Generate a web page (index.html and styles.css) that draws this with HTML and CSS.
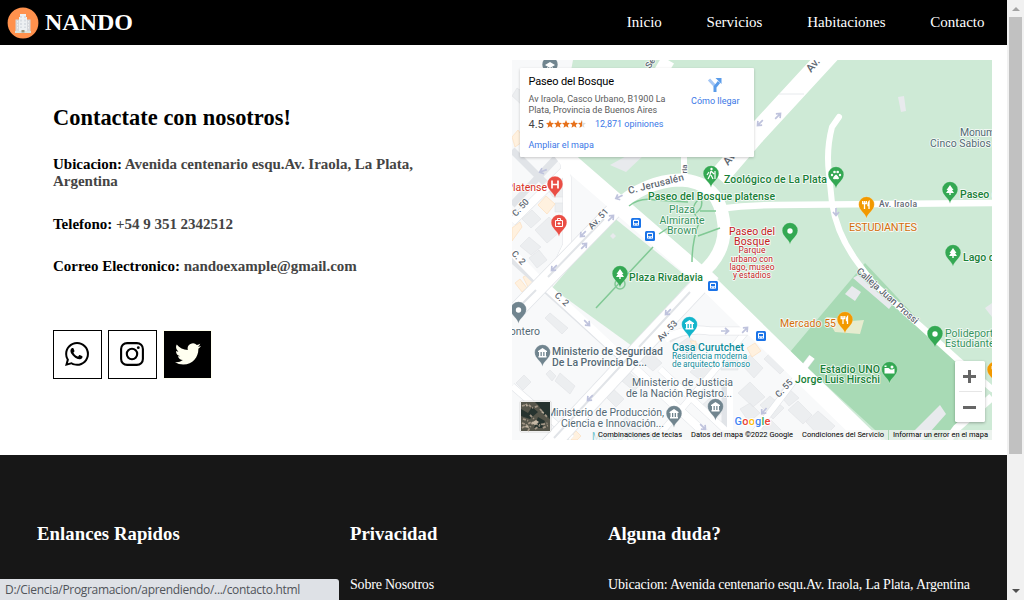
FILE: index.html
```html
<!DOCTYPE html>
<html lang="es">
<head>
<meta charset="utf-8">
<title>Nando - Contacto</title>
<link rel="stylesheet" href="styles.css">
</head>
<body>
<div class="page">
  <header class="header">
    <a class="brand">
      <svg class="logo" viewBox="0 0 32 32"><circle cx="16" cy="16" r="15.400" fill="#ff914d"/><path d="M8.500 12.500h4v12.500h-4zM19.500 12.500h4v12.500h-4z" fill="#d5d8dc"/><path d="M12 10h1V7h6v3h1v15h-8z" fill="#edf0f2"/><path d="M14 9v12M18 9v12" stroke="#c5ccd4" stroke-width="1" stroke-dasharray="2 1.500"/><path d="M10.500 14v8M21.500 14v8" stroke="#f0f0f0" stroke-dasharray="1.500 1.500"/><path d="M8 24h16v2H8z" fill="#d9e5e0"/><path d="M14.500 23h3v2.500h-3z" fill="#9b9478"/></svg>
      <span>NANDO</span>
    </a>
    <nav class="nav"><a>Inicio</a><a>Servicios</a><a>Habitaciones</a><a>Contacto</a></nav>
  </header>
  <main class="contact">
    <section class="info">
      <h2>Contactate con nosotros!</h2>
      <p><b>Ubicacion:</b> Avenida centenario esqu.Av. Iraola, La Plata,<br>Argentina</p>
      <p><b>Telefono:</b> +54 9 351 2342512</p>
      <p><b>Correo Electronico:</b> nandoexample@gmail.com</p>
      <div class="social">
        <a class="box"><svg viewBox="0 0 24 24"><path d="M.06 24l1.680-6.160A11.870 11.870 0 0 1 .160 11.890C.160 5.340 5.490 0 12.050 0a11.820 11.820 0 0 1 8.410 3.490 11.820 11.820 0 0 1 3.480 8.410c0 6.560-5.340 11.890-11.890 11.890-1.990 0-3.950-.500-5.690-1.450L.060 24zm6.590-3.810c1.680 1 3.280 1.590 5.400 1.590 5.450 0 9.890-4.430 9.890-9.880 0-5.460-4.420-9.890-9.880-9.890-5.450 0-9.890 4.430-9.890 9.880 0 2.230.650 3.890 1.750 5.630l-1 3.650 3.730-.980z"/><path d="M17.470 14.390c-.070-.130-.270-.200-.570-.350-.300-.150-1.760-.870-2.030-.970-.270-.100-.470-.150-.670.150-.200.300-.770.970-.940 1.170-.170.200-.350.220-.650.070-.300-.150-1.250-.460-2.390-1.470-.880-.790-1.480-1.760-1.650-2.060-.170-.300-.020-.460.130-.610.140-.130.300-.350.450-.520.150-.170.200-.300.300-.500.100-.200.050-.370-.030-.520-.070-.150-.670-1.610-.910-2.200-.250-.580-.490-.500-.670-.510h-.570c-.200 0-.520.070-.790.370-.270.300-1.040 1.020-1.040 2.480 0 1.460 1.060 2.880 1.210 3.070.150.200 2.100 3.200 5.080 4.490.710.310 1.260.490 1.690.630.710.230 1.360.190 1.870.120.570-.090 1.760-.720 2.010-1.410.250-.700.250-1.290.170-1.420z"/></svg></a>
        <a class="box"><svg viewBox="0 0 24 24" fill="none" stroke="#000" stroke-width="2.100"><rect x="1.100" y="1.100" width="21.800" height="21.800" rx="6"/><circle cx="12" cy="12" r="5.200"/><circle cx="18.300" cy="5.700" r="1.400" fill="#000" stroke="none"/></svg></a>
        <a class="box box-dark"><svg viewBox="0 0 24 24"><path fill="#fffff0" d="M23.950 4.570a10 10 0 0 1-2.820.770 4.960 4.960 0 0 0 2.160-2.720c-.950.550-2 .950-3.130 1.180a4.920 4.920 0 0 0-8.380 4.480C7.690 8.090 4.070 6.130 1.640 3.160a4.820 4.820 0 0 0-.670 2.480c0 1.710.870 3.210 2.190 4.100a4.900 4.900 0 0 1-2.230-.620v.060a4.920 4.920 0 0 0 3.950 4.830 5 5 0 0 1-2.210.080 4.940 4.940 0 0 0 4.600 3.420A9.870 9.870 0 0 1 0 19.540a13.990 13.990 0 0 0 7.560 2.210c9.050 0 14-7.500 14-13.980 0-.210 0-.420-.020-.630a9.940 9.940 0 0 0 2.460-2.550z"/></svg></a>
      </div>
    </section>
    <section class="map">
      <svg class="map-art" viewBox="512 60 480 380">
        <defs>
          <g id="pin"><path d="M0 13.500C-1 8-7.800 5.500-7.800-.5A7.800 7.800 0 0 1 7.800-.5C7.800 5.500 1 8 0 13.500z"/></g>
          <g id="tree" fill="#fff"><path d="M0-5L3.500 0H2L4 3H.7V5H-.7V3H-4L-2 0H-3.500z"/></g>
          <g id="bank" fill="#fff"><path d="M-4.500-2L0-5L4.500-2V-1H-4.500zM-4 3H4V4.500H-4zM-3.500-1H-2V3H-3.500zM-.7-1H.7V3H-.7zM2-1H3.500V3H2z"/></g>
          <g id="bus"><rect x="-5" y="-5" width="10" height="10" rx="1.500" fill="#1a73e8"/><rect x="-3" y="-3.200" width="6" height="6" rx="1" fill="#fff"/><path d="M-2-2H2V.3H-2zM-1.800 1.300h1v1h-1zM.8 1.300h1v1h-1z" fill="#1a73e8"/></g>
          <g id="fork" stroke="#fff" fill="none" stroke-width="1.300"><path d="M-2-4V4M-3.800-4V-1.500H-.2V-4M2.500 4V-3.500q-1.200 1-1 4h1"/></g>
          <g id="arr" stroke="#bfc3dd" stroke-width="1.700" fill="none"><path d="M-4 0H3M0-3L3.500 0L0 3"/></g>
        </defs>
        <rect x="512" y="60" width="480" height="380" fill="#f8f9fa"/>
        <!-- parks -->
        <g fill="#ceead6">
          <path d="M573 60H992V440H872L700 273L572 160L560 130z"/>
          <path d="M552 288L613 217L691 280L632 346z"/>
        </g>
        <path d="M865 263L790 352L886 440H958V362z" fill="#a8dab5"/>
        <g fill="#e8eaed">
          <path d="M898 97l6-1 2 15-5 1z"/><path d="M852 286l9 6-6 9-10-7zM610 236l3-3 3 3-3 3zM858 275l34 30-3 4-36-31z"/>
          <path d="M905 440l35-35 6 9-23 26zM985 308l7-5v14zM610 165l20-11h15l-19 18z"/>
        </g>
        <path d="M826 317l9 1 16 3 13-1-4 14-25-2z" fill="#e6eccf"/>
        <!-- secondary blocks -->
        <g fill="#eceef0" stroke="#e0e2e5" stroke-width=".6">
          <path d="M522 219l10-9 9 9-10 9zM535 230l14-13 13 13-15 13zM520 246l9-9 12 10-10 8zM529 258l10-8 8 10-10 8zM555 203h11v9h-11zM546 187l12-12 7 7v15h-12zM545 318l5-5 18 15-6 6zM555 381l5-8 15 13-5 8zM546 374l4-4 6 6-4 5zM516 383l8-8 7 7-8 8zM517 88l12 8-7 9-10-9z"/>
          <path d="M617 377l8-8 17 14-8 8zM601 392l8-7 15 14-8 8zM641 361l9-9 12 11-9 8zM676 346l13-9 11 9-11 14zM690 372l13-12 13 12-12 11zM721 354h17v16h-17zM741 364l9-9 13 13-9 10zM764 359l12-12 16 15-12 12zM738 393l12-11 15 15-12 10zM760 405l10-9 14 12-11 11zM778 393l8-7 13 12-10 8zM788 410l10-9 14 14-9 9zM806 422l12-11 17 15-13 13zM740 409l10-6 10 10-11 9zM762 428l9-8 13 13-7 7h-8z"/>
          <path d="M618 426l8-9 15 12-9 11zM700 407l10-9 14 13-10 9z"/>
        </g>
        <g fill="#fff1df" stroke="#fbdcb8" stroke-width=".6"><path d="M538 205l8-9 9 8-8 10zM512 241v-13l8-6 2 5zM515 283l5-4 7 9-5 4zM523 277l6-3 4 9-5 4zM747 348l8-5 6 8-9 6zM512 137l6-7 7 10-10 7zM570 436l6-5 5 5-4 4h-6zM690 341h6v8z"/></g>
        <!-- road casing and fill -->
        <g fill="none" stroke-linejoin="round">
          <g stroke="#e1e4e8">
            <path d="M512 222L571 164M512 258L644 377L712 440M548 285L567 245V178L558 130" stroke-width="9"/>
            <path d="M512 150L545 183M512 386L572 438M660 369L736 440M752 324L718 366L655 440M725 382V440M812 357L749 440M512 205L620 90" stroke-width="7"/>
          </g>
          <g stroke="#fff">
            <path d="M512 222L571 164M512 252L542 283L644 377L712 440M548 285L567 245V178L558 130" stroke-width="8"/>
            <path d="M512 386L572 438M660 369L736 440M752 324L718 366L655 440M730 382V440M812 357L749 440" stroke-width="6"/>
            <path d="M668 339Q685 327 710 331H748" stroke="#e5e7ea" stroke-width="9"/><path d="M665 339Q685 327 710 331H750" stroke-width="7.500"/>
            <path d="M512 315L542 284L618 206" stroke="#e1e4e8" stroke-width="17"/><path d="M512 315L542 284L618 206" stroke-width="15.500"/>
            <path d="M712 272L632 357L548 447" stroke="#e1e4e8" stroke-width="19"/><path d="M712 272L632 357L548 447" stroke-width="17.500"/>
            <path d="M543 128L572 164L625 210L699 274L750 324L877 448" stroke-width="18"/>
            <path d="M835 48L754 136L718 178" stroke-width="20"/>
            <path d="M615 208Q645 181 680 180Q720 181 724 225Q726 255 698 276" stroke-width="13"/>
            <path d="M684 150V184" stroke-width="6"/><path d="M668 60L650 90" stroke-width="14"/>
            <path d="M718 209Q745 205 775 205L992 203" stroke-width="6.500"/>
            <path d="M839 117L832 127Q826 150 829 174L832 203Q837 235 858 263L873 283L957 359L992 389" stroke-width="6" stroke-linecap="round"/>
            <path d="M948 440L957 428L992 397" stroke-width="8"/>
          </g>
          <g stroke="#e1e4e8"><path d="M512 314L536 290M548 277L604 219M690 292L639 347M628 358L554 438" stroke-width="2"/><path d="M779 94H804" stroke-width=".8"/></g>
          <g stroke="#81c995" stroke-width="1.500"><path d="M653 247L596 308M629 206Q640 197 655 200L688 202M659 234L668 228M698 200Q688 210 700 220Q692 240 692 262M700 211H716M698 236L720 228M700 195Q705 207 696 213"/><circle cx="620" cy="284" r="5"/></g>
        </g>
        <use href="#arr" transform="translate(760 123) rotate(135)"/><use href="#arr" transform="translate(778 116) rotate(-45)"/>
        <use href="#arr" transform="translate(583 234) rotate(135)"/><use href="#arr" transform="translate(584 246) rotate(-45)"/><use href="#arr" transform="translate(611 218) rotate(-45)"/><use href="#arr" transform="translate(554 268) rotate(135)"/><use href="#arr" transform="translate(619 197) rotate(155)"/><use href="#arr" transform="translate(587 323) rotate(45)"/><use href="#arr" transform="translate(668 312) rotate(135)"/><use href="#arr" transform="translate(590 398) rotate(135)"/><use href="#arr" transform="translate(725 331)"/><use href="#arr" transform="translate(745 330) rotate(-45)"/><use href="#arr" transform="translate(836 212) rotate(90)"/><use href="#arr" transform="translate(703 427) rotate(45)"/><use href="#arr" transform="translate(764 411) rotate(130)"/><use href="#arr" transform="translate(543 171) rotate(160)"/>
        <use href="#bus" x="636" y="223"/><use href="#bus" x="650" y="236"/><use href="#bus" x="713" y="286"/><use href="#bus" x="761" y="336"/>
        <!-- pins -->
        <g stroke="#fff" stroke-opacity=".5" stroke-width=".4">
          <g fill="#34a853"><use href="#pin" x="711" y="174"/><use href="#pin" x="836" y="175"/><use href="#pin" x="950" y="190"/><use href="#pin" x="790" y="231"/><use href="#pin" x="953" y="253"/><use href="#pin" x="620" y="274"/><use href="#pin" x="935" y="334"/><use href="#pin" x="889.500" y="370"/></g>
          <g fill="#f29900"><use href="#pin" x="866.500" y="205"/><use href="#pin" x="845" y="320"/><use href="#pin" x="995" y="370"/></g>
          <g fill="#ea4e45"><use href="#pin" x="555" y="184.500"/><use href="#pin" x="559" y="223"/></g>
          <g fill="#71858f"><use href="#pin" x="550" y="65"/><use href="#pin" x="518.500" y="310"/><use href="#pin" x="542.500" y="353"/><use href="#pin" x="674" y="414"/><use href="#pin" x="715.500" y="407"/></g>
          <use href="#pin" x="689.500" y="325" fill="#12b5cb"/>
        </g>
        <use href="#tree" x="620" y="274"/><use href="#tree" x="950" y="190"/><use href="#tree" x="953" y="253"/>
        <use href="#bank" x="542.500" y="353"/><use href="#bank" x="674" y="414"/><use href="#bank" x="715.500" y="407"/><use href="#bank" x="689.500" y="325"/>
        <use href="#fork" x="866.500" y="205"/><use href="#fork" x="845" y="320"/><use href="#fork" x="996" y="370"/>
        <g fill="#fff"><circle cx="790" cy="231" r="2.700"/><circle cx="935" cy="334" r="2.700"/><circle cx="518.500" cy="310" r="2.700"/>
          <circle cx="832" cy="175" r="1.200"/><circle cx="834.500" cy="172" r="1.300"/><circle cx="837.700" cy="172" r="1.300"/><circle cx="840" cy="175" r="1.200"/><path d="M836 174.500q2 1 3 3.500 0 2-3 1-3 1-3-1 1-2.500 3-3.500z"/>
          <path d="M884.500 368h4l2 1.500h2l2-1v5h-10zM884.500 365.500h2v1.500h-2z"/><circle cx="892" cy="367" r="1.500"/><path d="M545 65l5-3 5 3-5 3zM547 67l3 2 3-2v3h-6z"/></g>
        <g stroke="#fff" fill="none" stroke-width="1.700"><path d="M552 180.500v8M558 180.500v8M552 184.500h6"/><path d="M555.500 220.500h7v6h-7zM557.500 220v-1.500h3v1.500M559 222v3M557.500 223.500h3" stroke-width="1"/><path d="M711 171l-1 4-2 4M711 175l2 4M711 171l3 3M709 172l-2 3M715 171v8" stroke-width="1.200"/></g><circle cx="711.500" cy="169" r="1.200" fill="#fff"/>
        <!-- labels -->
        <g class="lbl">
          <g fill="#5f6872" font-size="9"><text transform="translate(811 73) rotate(-50)" font-size="11">Av.</text><text transform="translate(728 166) rotate(-50)" font-size="11">Av.</text><text transform="translate(650 69) rotate(-58)">Se</text><text transform="translate(687 169) rotate(-90)" text-anchor="middle" font-size="8">ria</text>
            <text transform="translate(516 217) rotate(-48)" textLength="20">C. 50</text><text transform="translate(592 230) rotate(-47)" textLength="25">Av. 51</text><text transform="translate(511 254) rotate(47)">C. 2</text><text transform="translate(554 296) rotate(43)">C. 2</text><text transform="translate(661 342) rotate(-47)" textLength="25">Av. 53</text><text transform="translate(779 398) rotate(-47)" textLength="21">C. 55</text>
            <text x="879" y="207" textLength="38" font-size="8.500">Av. Iraola</text><text transform="translate(856 272) rotate(41.500)" textLength="79" font-size="9.500">Calleja Juan Prossi</text><text transform="translate(629 194) rotate(-14)" textLength="57" font-size="10">C. Jerusalén</text></g>
          <g fill="#188038" font-size="10.500"><text x="724" y="183" textLength="103">Zoológico de La Plata</text><text x="648" y="200" textLength="127">Paseo del Bosque platense</text><text x="629" y="281" textLength="74">Plaza Rivadavia</text><text x="960" y="198">Paseo del</text><text x="963" y="261">Lago del</text><text x="880" y="373" text-anchor="end" textLength="60">Estadio UNO</text><text x="880" y="383" text-anchor="end" textLength="85">Jorge Luis Hirschi</text></g>
          <g fill="#389460" font-size="10.500" class="thin"><g text-anchor="middle"><text x="682" y="213" textLength="26">Plaza</text><text x="682" y="224" textLength="45">Almirante</text><text x="682" y="234" textLength="30">Brown</text></g><text x="945" y="336.500">Polideportivo</text><text x="945" y="347">Estudiantes</text></g>
          <g fill="#c5221f" text-anchor="middle" class="thin"><text x="752" y="234.500" font-size="10.500" textLength="46">Paseo del</text><text x="752" y="245" font-size="10.500" textLength="36">Bosque</text><g font-size="8.500"><text x="752" y="253" textLength="27">Parque</text><text x="752" y="261.500" textLength="42">urbano con</text><text x="752" y="269.500" textLength="45">lago, museo</text><text x="752" y="278" textLength="38">y estadios</text></g></g>
          <text x="547" y="191" fill="#d93025" text-anchor="end" font-size="10.500" class="thin">Platense</text>
          <g fill="#d56e0c" font-size="10.500" class="thin"><text x="849" y="231" textLength="68" font-size="11">ESTUDIANTES</text><text x="780" y="327" textLength="56">Mercado 55</text></g>
          <g fill="#0b8b9b"><text x="672" y="350.500" font-size="10.500" textLength="72">Casa Curutchet</text><text x="672" y="359" font-size="8.500" textLength="75" class="thin">Residencia moderna</text><text x="672" y="367" font-size="8.500" textLength="78" class="thin">de arquitecto famoso</text></g>
          <g fill="#546975" font-size="10.500"><text x="552" y="355" textLength="111">Ministerio de Seguridad</text><text x="552" y="365.500" textLength="95">De La Provincia De...</text><g class="thin"><text x="540" y="335" text-anchor="end">Montero</text><text x="632" y="386" textLength="101">Ministerio de Justicia</text><text x="626" y="396.500" textLength="106">de la Nación Registro...</text><text x="547" y="416" textLength="117">Ministerio de Producción,</text><text x="561" y="426.500" textLength="103">Ciencia e Innovación...</text><text x="960" y="136" textLength="55">Monumento</text><text x="930" y="147" textLength="61">Cinco Sabios</text></g></g>
        </g>
        <text x="592" y="440" fill="#12a5b8" font-size="10" opacity=".6" textLength="68">Museo Policial</text>
        <text x="734.500" y="424.500" class="google" font-size="11" textLength="36"><tspan fill="#4285f4">G</tspan><tspan fill="#ea4335">o</tspan><tspan fill="#fbbc05">o</tspan><tspan fill="#4285f4">g</tspan><tspan fill="#34a853">l</tspan><tspan fill="#ea4335">e</tspan></text>
        <rect x="595" y="430" width="397" height="10" fill="#f5f5f5" opacity=".75"/>
        <path d="M888.500 430v10" stroke="#a8dab5"/>
        <g font-size="7.500" fill="#000"><text x="598" y="437.300" textLength="84">Combinaciones de teclas</text><text x="691" y="437.300" textLength="102">Datos del mapa ©2022 Google</text><text x="802" y="437.300" textLength="82">Condiciones del Servicio</text><text x="893" y="437.300" textLength="95">Informar un error en el mapa</text></g>
        <!-- satellite thumbnail -->
        <rect x="520" y="401" width="31" height="31" rx="1.500" fill="#fff" stroke="#bbb" stroke-width=".5"/>
        <rect x="521" y="402" width="29" height="29" fill="#55554a"/>
        <g fill="#26332f"><path d="M535 402h15v17l-7-5-4-8zM521 409l7 4 4-6 6 5-8 7-9-3zM538 417l7 4-3 7h-8z"/></g><g stroke="#a29686" fill="none"><path d="M522 406l6-2 4 4 6-2M522 428l9-6 8 3 10-2M528 431l5-9M540 409l8 9M523 419l6 2M543 428l6-3M522 423l7 3M535 429l7-5M530 415l4 4" stroke-dasharray="3 1.500 1 2" stroke-width="1.800"/></g><g fill="#c5b8a5"><path d="M531 423l5-3 3 2-4 3zM524 427l4-2 1 3zM541 412l2-1 1 3zM525 404l3 1-1 2z"/></g>
      </svg>
      <div class="card">
        <div class="card-main">
          <div class="card-title">Paseo del Bosque</div>
          <div class="card-address">Av Iraola, Casco Urbano, B1900 La<br>Plata, Provincia de Buenos Aires</div>
          <div class="rating"><span class="score">4.5</span><svg viewBox="0 0 40 8" width="40" height="8"><g fill="#e7711b"><path id="s" d="M4 0l1.100 2.800 2.900.2-2.200 1.900.7 2.900L4 6.200 1.500 7.800l.7-2.900L0 3l2.900-.2z"/><use href="#s" x="8"/><use href="#s" x="16"/><use href="#s" x="24"/></g><use href="#s" x="32" fill="#ddd"/><path d="M36 0v6.200l-2.500 1.600.7-2.900L32 3l2.900-.2z" fill="#e7711b"/></svg><a>12,871 opiniones</a></div>
          <a class="enlarge">Ampliar el mapa</a>
        </div>
        <div class="directions"><svg viewBox="0 0 16 16" width="16" height="16"><path d="M2 2.500L8 9" stroke="#a5c7f5" stroke-width="3" fill="none"/><path d="M8 15V10L12 5" stroke="#5a9cea" stroke-width="3" fill="none"/><path d="M8.500 1h6v6z" fill="#5a9cea"/></svg><a>Cómo llegar</a></div>
      </div>
      <div class="zoom"><span class="plus"></span><i></i><span class="minus"></span></div>
    </section>
  </main>
  <footer class="footer">
    <section class="links"><h3>Enlances Rapidos</h3></section>
    <section class="privacy"><h3>Privacidad</h3><p>Sobre Nosotros</p></section>
    <section><h3>Alguna duda?</h3><p class="address">Ubicacion: Avenida centenario esqu.Av. Iraola, La Plata, Argentina</p></section>
  </footer>
</div>
<div class="scrollbar"><span class="up"></span><div class="thumb"></div><span class="down"></span></div>
<div class="status">D:/Ciencia/Programacion/aprendiendo/.../contacto.html</div>
</body>
</html>
```
FILE: styles.css
```css
* { box-sizing: border-box; }
body { margin: 0; width: 1024px; height: 600px; overflow: hidden; display: flex; background: #fff; font-family: "Liberation Serif", "Times New Roman", serif; }
h2, h3, p { margin: 0; }
.page { width: 1007px; height: 600px; display: flex; flex-direction: column; }
.header { height: 45px; background: #000; color: #fff; display: flex; justify-content: space-between; align-items: center; padding: 0 22.500px 0 7px; }
.brand { display: flex; align-items: center; gap: 6px; font-size: 24px; font-weight: bold; }
.logo { width: 32px; height: 32px; }
.nav { display: flex; gap: 44.800px; font-size: 15px; }
.contact { height: 410px; display: flex; padding: 15px 15px 15px 53px; }
.info { width: 459px; padding-top: 45px; }
.info h2 { font-size: 22.400px; line-height: 25px; margin-bottom: 26px; letter-spacing: .03px; }
.info p { font-size: 15px; line-height: 17px; font-weight: bold; color: #444; margin-bottom: 25.500px; white-space: nowrap; letter-spacing: -.02px; }
.info p b { color: #000; }
.social { display: flex; gap: 6px; padding-top: 29px; }
.box { width: 49px; height: 49px; border: 1px solid #000; display: flex; align-items: center; justify-content: center; padding-right: 1px; }
.box svg { width: 24px; height: 24px; }
.box-dark { background: #000; border-color: #fffff0; padding: 0; }
.box-dark svg { width: 26px; height: 26px; }
.map { width: 480px; height: 380px; position: relative; font-family: Roboto, sans-serif; overflow: hidden; }
.map-art { display: block; width: 480px; height: 380px; }
.lbl { font-weight: 500; }
.lbl text { paint-order: stroke; stroke: #fff; stroke-opacity: .75; stroke-width: 1.800px; stroke-linejoin: round; }
.thin { font-weight: 400; }
.google { font-weight: 500; paint-order: stroke; stroke: #fff; stroke-width: 2px; }
.card { position: absolute; left: 8px; top: 8px; width: 234px; height: 89px; background: #fff; border-radius: 1px; box-shadow: 0 1px 3px rgba(0,0,0,.2); display: flex; justify-content: space-between; padding: 7px 14.500px 0 8.500px; white-space: nowrap; }
.card a { color: #3b78e7; font-size: 9px; }
.card-title { font-size: 11px; line-height: 13px; color: #000; letter-spacing: -.15px; }
.card-address { font-size: 9px; line-height: 11px; color: #5b5b5b; margin-top: 6px; }
.rating { display: flex; align-items: center; height: 14px; margin-top: 1px; }
.score { font-size: 11px; color: #444; width: 17.500px; }
.rating a { margin-left: 9px; }
.enlarge { display: block; line-height: 12px; margin-top: 8px; }
.directions { display: flex; flex-direction: column; align-items: center; gap: 3px; padding-top: 2px; }
.zoom { position: absolute; left: 443px; top: 301px; width: 30px; height: 61px; background: #fff; border-radius: 1.500px; box-shadow: 0 1px 3px rgba(0,0,0,.3); display: flex; flex-direction: column; align-items: center; }
.plus { width: 13px; height: 30px; margin-right: 1px; background: linear-gradient(#666,#666) center/13px 3px no-repeat, linear-gradient(#666,#666) center/3px 13px no-repeat; }
.zoom i { width: 23px; height: 1px; background: #e6e6e6; }
.minus { width: 13px; height: 30px; margin-right: 1px; background: linear-gradient(#666,#666) center/13px 3px no-repeat; }
.footer { flex: 1; background: #171717; color: #fff; display: flex; padding: 68px 0 0 37px; }
.links { width: 313px; }
.privacy { width: 258px; }
.footer h3 { font-size: 18.720px; line-height: 22px; margin-bottom: 32px; }
.links h3 { letter-spacing: .06px; }
.footer p { font-size: 14px; line-height: 16px; letter-spacing: -.2px; white-space: nowrap; }
.scrollbar { width: 17px; height: 600px; background: #f1f1f1; display: flex; flex-direction: column; align-items: center; }
.up { height: 17px; display: flex; padding-top: 7px; }
.up::before { content: ""; border: 4px solid transparent; border-top: 0; border-bottom: 4px solid #a3a3a3; height: 0; }
.thumb { width: 13px; height: 437px; background: #c1c1c1; }
.down { margin-top: auto; height: 11px; }
.down::before { content: ""; display: block; border: 4px solid transparent; border-bottom: 0; border-top: 4px solid #505050; }
.status { position: absolute; left: 0; top: 579px; width: 339px; height: 21px; background: #dee1e6; border-top-right-radius: 3px; color: #50545a; font: 12px/21px "Open Sans", sans-serif; letter-spacing: -.31px; padding-left: 5px; white-space: nowrap; }
```
